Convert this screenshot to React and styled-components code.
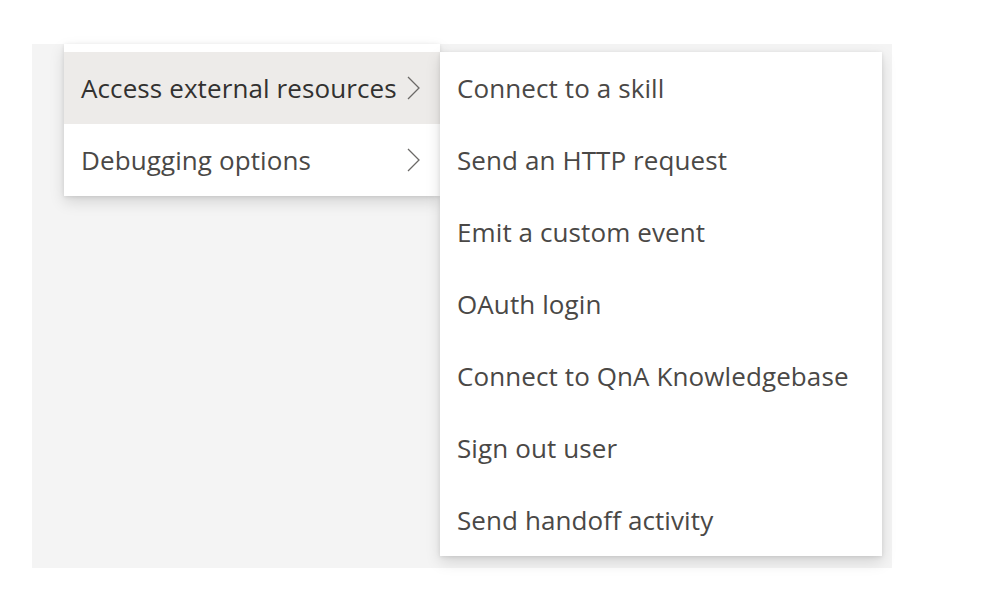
import React from "react";
import styled, { createGlobalStyle } from "styled-components";

const Global = createGlobalStyle`
  html, body { margin: 0; padding: 0; background: #ffffff; }
  body { font-family: "Open Sans", "Noto Sans", sans-serif; -webkit-font-smoothing: antialiased; }
`;

const Page = styled.div`
  width: 982px;
  height: 604px;
  padding: 44px 0 0 32px;
  box-sizing: border-box;
`;

const Stage = styled.div`
  width: 860px;
  height: 524px;
  background: #f4f4f4;
  padding-left: 32px;
  box-sizing: border-box;
  display: flex;
  align-items: flex-start;
`;

const Menu = styled.div`
  width: 376px;
  background: #ffffff;
  padding-top: 8px;
  box-shadow: 0 6px 14px rgba(0, 0, 0, 0.13), 0 1px 4px rgba(0, 0, 0, 0.1);
  display: flex;
  flex-direction: column;
  position: relative;
  z-index: 1;
`;

const SubMenu = styled.div`
  width: 442px;
  margin-top: 8px;
  background: #ffffff;
  box-shadow: 0 6px 14px rgba(0, 0, 0, 0.13), 0 1px 4px rgba(0, 0, 0, 0.1);
  display: flex;
  flex-direction: column;
  position: relative;
  z-index: 2;
`;

const Item = styled.div`
  height: 72px;
  display: flex;
  align-items: center;
  padding: 0 20px 0 17px;
  background: ${(p) => (p.$active ? "#edebe9" : "transparent")};
  color: ${(p) => (p.$active ? "#323130" : "#4a4846")};
  font-size: 26px;
  letter-spacing: 0.1px;
  white-space: nowrap;
`;

const Label = styled.span`
  flex: 1;
`;

const Chevron = styled.svg`
  width: 13px;
  height: 24px;
  flex: none;
`;

const ChevronIcon = () => (
  <Chevron viewBox="0 0 13 24">
    <path d="M1 1 L12 12 L1 23" fill="none" stroke="#6b6967" strokeWidth="1.3" />
  </Chevron>
);

const subItems = [
  "Connect to a skill",
  "Send an HTTP request",
  "Emit a custom event",
  "OAuth login",
  "Connect to QnA Knowledgebase",
  "Sign out user",
  "Send handoff activity",
];

export default function App() {
  return (
    <Page>
      <Global />
      <Stage>
        <Menu>
          <Item $active>
            <Label>Access external resources</Label>
            <ChevronIcon />
          </Item>
          <Item>
            <Label>Debugging options</Label>
            <ChevronIcon />
          </Item>
        </Menu>
        <SubMenu>
          {subItems.map((t) => (
            <Item key={t}>
              <Label>{t}</Label>
            </Item>
          ))}
        </SubMenu>
      </Stage>
    </Page>
  );
}
